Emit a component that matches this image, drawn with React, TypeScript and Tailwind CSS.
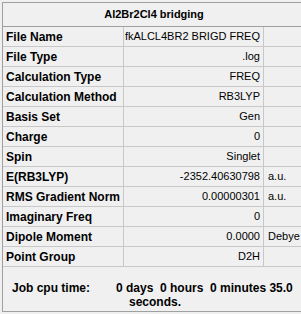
import React from 'react'

// ── Data ─────────────────────────────────────────────────────────

interface SummaryRow {
  label: string
  value: string
  unit?: string
}

const rows: SummaryRow[] = [
  { label: 'File Name', value: 'fkALCL4BR2 BRIGD FREQ' },
  { label: 'File Type', value: '.log' },
  { label: 'Calculation Type', value: 'FREQ' },
  { label: 'Calculation Method', value: 'RB3LYP' },
  { label: 'Basis Set', value: 'Gen' },
  { label: 'Charge', value: '0' },
  { label: 'Spin', value: 'Singlet' },
  { label: 'E(RB3LYP)', value: '-2352.40630798', unit: 'a.u.' },
  { label: 'RMS Gradient Norm', value: '0.00000301', unit: 'a.u.' },
  { label: 'Imaginary Freq', value: '0' },
  { label: 'Dipole Moment', value: '0.0000', unit: 'Debye' },
  { label: 'Point Group', value: 'D2H' },
]

// ── Component ────────────────────────────────────────────────────

export default function App() {
  return (
    <div
      className="w-[301px] h-[314px] overflow-hidden bg-[#f0f0f0] pt-[2px] pl-[2px] text-black"
      style={{ fontFamily: '"Liberation Sans", Arial, sans-serif' }}
    >
      <div className="w-[304px] h-[310px] border border-[#a0a0a0] flex flex-col">
        {/* Title */}
        <div className="h-[24px] border-b border-[#a0a0a0] flex items-center justify-center text-[11px] font-bold">
          Al2Br2Cl4 bridging
        </div>

        {/* Property grid */}
        <div className="grid grid-cols-[121px_140px_1fr]">
          {rows.map(r => (
            <React.Fragment key={r.label}>
              <div className="h-[20px] border-b border-r border-[#c8c8c8] flex items-center pl-[3px] text-[12px] font-bold whitespace-nowrap">
                {r.label}
              </div>
              <div className="h-[20px] border-b border-r border-[#c8c8c8] flex items-center justify-end pr-[3px] text-[11px] whitespace-nowrap">
                {r.value}
              </div>
              <div className="h-[20px] border-b border-[#c8c8c8] flex items-center pl-[4px] text-[11px] whitespace-nowrap">
                {r.unit ?? ''}
              </div>
            </React.Fragment>
          ))}
        </div>

        {/* Job time footer */}
        <div className="flex pt-[14px] text-[12px] font-bold leading-[14px]">
          <div className="w-[113px] pl-[9px] shrink-0">Job cpu time:</div>
          <div className="flex flex-col">
            <span className="whitespace-pre">0 days  0 hours  0 minutes 35.0</span>
            <span className="pl-[13px]">seconds.</span>
          </div>
        </div>
      </div>
    </div>
  )
}
